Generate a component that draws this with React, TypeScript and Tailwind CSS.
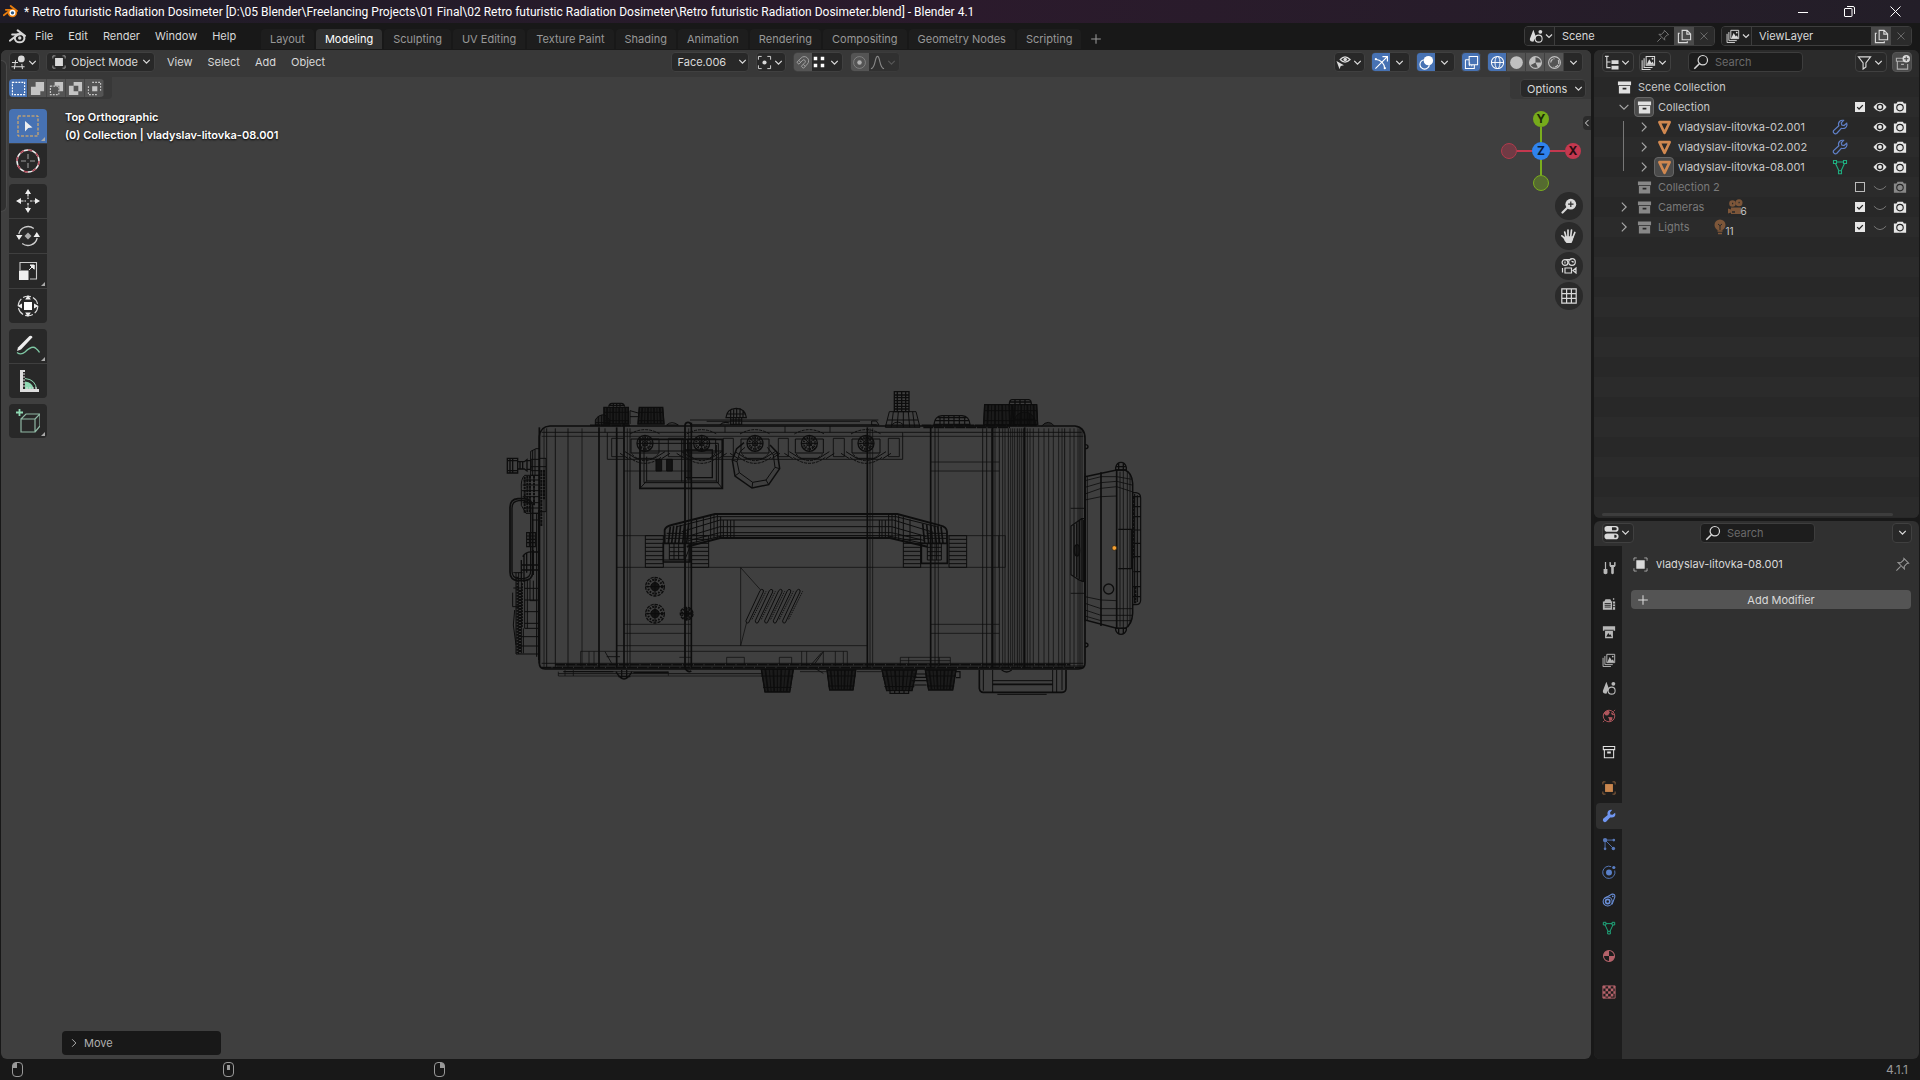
import { useState } from "react";
import type { ReactNode } from "react";

type IconProps = { name: string; size?: number; className?: string };

const icons: Record<string, ReactNode> = {
  chevron: <path d="M4 6 8 10l4-4" fill="none" stroke="currentColor" strokeWidth="1.6" />,
  right: <path d="M5.5 3 10.5 8l-5 5" fill="none" stroke="currentColor" strokeWidth="1.3" />,
  left: <path d="M10.5 3 5.5 8l5 5" fill="none" stroke="currentColor" strokeWidth="1.6" />,
  down: <path d="M3 5.5 8 10.5l5-5" fill="none" stroke="currentColor" strokeWidth="1.3" />,
  plus: <path d="M8 2.500v11M2.500 8h11" fill="none" stroke="currentColor" strokeWidth="1.2" />,
  cross: <path d="m4 4 8 8M12 4l-8 8" fill="none" stroke="currentColor" strokeWidth="1.1" />,
  check: <path d="m3.5 8.2 3 3 6-6.2" fill="none" stroke="currentColor" strokeWidth="2" />,
  blender: (
    <>
      <path d="M8.2 2.2 15 7.4M.8 12 8.4 6.2M3 6.2h7" fill="none" stroke="currentColor" strokeWidth="1.9" strokeLinecap="round" />
      <ellipse cx="10" cy="9.6" rx="4.5" ry="3.9" fill="none" stroke="currentColor" strokeWidth="1.9" />
      <circle cx="10.1" cy="9.4" r="1.6" fill="currentColor" />
    </>
  ),
  view3d: (
    <>
      <path d="M5 5.5 3.5 15M11.5 9.5l.7 5.5M1 8h6.5M.5 12.5h14" fill="none" stroke="currentColor" strokeWidth="1.1" />
      <circle cx="11" cy="4.2" r="3.6" fill="currentColor" />
    </>
  ),
  object: (
    <>
      <path d="M1 4V1h3M12 1h3v3M15 12v3h-3M4 15H1v-3" fill="none" stroke="currentColor" strokeWidth="1" opacity=".7" />
      <path d="M3.500 3.500h9v9h-9z" fill="currentColor" />
    </>
  ),
  pivot: (
    <>
      <path d="M1.5 5V1.5H5M11 1.5h3.5V5M14.5 11v3.500H11M5 14.500H1.500V11" fill="none" stroke="currentColor" strokeWidth="1" />
      <circle cx="8" cy="8" r="2.200" fill="currentColor" />
    </>
  ),
  magnet: (
    <path d="M2 7.800 6.500 3.200a4.600 4.600 0 0 1 6.800 6.300L9 14.200 6.800 12l4-4.200a1.800 1.800 0 0 0-2.400-2.500L4.200 9.800zM4 5.800l2.200 2.100M10.900 12.100 8.800 10" fill="none" stroke="currentColor" strokeWidth="1" />
  ),
  increment: <path d="M2 2h4v4H2zM10 2h4v4h-4zM2 10h4v4H2zM10 10h4v4h-4z" fill="currentColor" />,
  proportional: (
    <>
      <circle cx="8" cy="8" r="6.300" fill="none" stroke="currentColor" strokeWidth="1" opacity=".5" />
      <circle cx="8" cy="8" r="2.400" fill="currentColor" />
    </>
  ),
  falloff: <path d="M1 14.500C6 14.500 5 1.500 8 1.500s2 13 7 13" fill="none" stroke="currentColor" strokeWidth="1.200" />,
  visibility: (
    <>
      <path d="M4.500 4.800Q9.500-1 15 4.800 9.500 10.500 4.500 4.800z" fill="none" stroke="currentColor" strokeWidth="1.300" />
      <circle cx="9.800" cy="4.700" r="1.900" fill="currentColor" />
      <path d="M.5 6.500 8.500 10.800 5 11.700l-1.200 3.600z" fill="currentColor" />
    </>
  ),
  gizmo: (
    <>
      <path d="M1.500 14.500 14 2M9 1.700h5.300V7M1.500 4.500Q10.500 5.500 11.500 14.500" fill="none" stroke="currentColor" strokeWidth="1.200" />
      <circle cx="2" cy="4.500" r="1.200" fill="currentColor" />
      <circle cx="11.500" cy="14" r="1.200" fill="currentColor" />
    </>
  ),
  overlay: (
    <>
      <circle cx="10" cy="6" r="5" fill="currentColor" />
      <circle cx="6" cy="10" r="5" fill="none" stroke="currentColor" strokeWidth="1.200" />
    </>
  ),
  xray: (
    <>
      <path d="M5.500 1.500h9v9h-9zM1.500 5v9.500H11V11M1.500 5h4" fill="none" stroke="currentColor" strokeWidth="1.100" />
      <path d="M6 8v3.500h4" fill="none" stroke="currentColor" strokeDasharray="1.500 1" />
    </>
  ),
  wire: (
    <>
      <circle cx="8" cy="8" r="6.500" fill="none" stroke="currentColor" strokeWidth="1.100" />
      <path d="M1.500 8h13M7 1.500q-3.500 6.500 0 13M9 1.500q3.500 6.500 0 13" fill="none" stroke="currentColor" strokeWidth="1" />
    </>
  ),
  solid: <circle cx="8" cy="8" r="6.800" fill="currentColor" />,
  material: (
    <>
      <circle cx="8" cy="8" r="6.300" fill="none" stroke="currentColor" strokeWidth="1.200" />
      <path d="M8 8V1.700A6.300 6.300 0 0 0 1.700 8zM8 8h6.300A6.300 6.300 0 0 1 8 14.300z" fill="currentColor" />
    </>
  ),
  previewMaterial: (
    <>
      <circle cx="8" cy="8" r="6.300" fill="none" stroke="currentColor" strokeWidth="1.200" />
      <path d="M8 8V1.700A6.300 6.300 0 0 0 2.600 11zM8 8l2.600 5.800A6.300 6.300 0 0 0 14.300 8z" fill="currentColor" />
    </>
  ),
  rendered: (
    <>
      <circle cx="8" cy="8" r="6.300" fill="none" stroke="currentColor" strokeWidth="1.200" />
      <path d="M4 8a4 4 0 0 1 4-4M12 5.500a5 5 0 0 1-5 7.300" fill="none" stroke="currentColor" strokeWidth="1.300" strokeDasharray="4 1" />
    </>
  ),
  scene: (
    <>
      <path d="M5 .8 1 11q-.5 3.500 4 3.500 1-3 2.500-4.200L8 9z" fill="currentColor" />
      <circle cx="13" cy="3.200" r="2.200" fill="currentColor" />
      <circle cx="11" cy="11" r="4" fill="none" stroke="currentColor" strokeWidth="1.200" />
    </>
  ),
  layers: (
    <>
      <path d="M5.500 1.500h9v9.500h-9zM3.300 3.500v9.800h9M1.200 5.500v10h9" fill="none" stroke="currentColor" strokeWidth="1.100" />
      <path d="m6 10.500 2.800-6 2.400 4 1.300-1.500 1.500 3.500z" fill="currentColor" />
      <circle cx="12.300" cy="4" r="1" fill="currentColor" />
    </>
  ),
  pin: (
    <path d="M1.500 14.500 6 10M9.500 1.500 14.500 6.500l-1.700.3-3 3.200.2 2.800L3.300 6l2.800.2 3.200-3z" fill="none" stroke="currentColor" strokeWidth="1.100" />
  ),
  copy: (
    <path d="M5.500 1.500h5.300l3.700 3.700v6.300h-9zM10.500 1.500v4h4M3 4.500H1.500v10H11V13" fill="none" stroke="currentColor" strokeWidth="1.200" />
  ),
  outliner: (
    <>
      <path d="M1 1.500h4M3 1.500v12h4M3 7.500h4" fill="none" stroke="currentColor" strokeWidth="1.200" />
      <path d="M8 5.500h7.500v4H8zM8 11.500h7.500v4H8z" fill="currentColor" />
    </>
  ),
  properties: (
    <>
      <rect x=".5" y="1" width="15" height="6.200" rx="3" fill="currentColor" />
      <rect x=".5" y="9" width="15" height="6.200" rx="3" fill="currentColor" />
      <path d="M8.500 2.500h3.500a1.600 1.600 0 0 1 0 3.200H8.500zM11 10.500h1a1.600 1.600 0 0 1 0 3.200h-1z" fill="#282828" />
    </>
  ),
  search: (
    <>
      <circle cx="9.800" cy="6.200" r="4.700" fill="none" stroke="currentColor" strokeWidth="1.200" />
      <path d="m6.300 9.700-5 5" fill="none" stroke="currentColor" strokeWidth="1.600" />
    </>
  ),
  filter: <path d="M1.500 2h13L9.500 8.500v4.300L6.500 15V8.500z" fill="none" stroke="currentColor" strokeWidth="1.200" />,
  newCollection: (
    <>
      <path d="M9 3.500H1.500v3.200h13M2.500 7v8h11V9.500M6.500 10h3" fill="none" stroke="currentColor" strokeWidth="1.200" opacity=".7" />
      <circle cx="12" cy="4" r="4" fill="currentColor" />
      <path d="M12 1.700v4.600M9.700 4h4.600" stroke="#444" strokeWidth="1.100" />
    </>
  ),
  collection: (
    <>
      <path d="M1 1.500h14v4H1zM2 6.500h12v8H2z" fill="currentColor" />
      <path d="M6 8.200h4V10H6z" fill="#282828" />
    </>
  ),
  collectionTab: <path d="M1.500 1.700h13v3.600h-13zM2.700 5.500v9h10.600v-9M6.500 8h3v1h-3z" fill="none" stroke="currentColor" strokeWidth="1.200" />,
  mesh: <path d="M2.500 2.300h11L8 13.800z" fill="none" stroke="currentColor" strokeWidth="2.800" strokeLinejoin="round" />,
  meshData: (
    <>
      <path d="M4.500 3h7M3.500 4.500 7 12M12.500 4.500 9 12" fill="none" stroke="currentColor" strokeWidth="1.100" />
      <path d="M1.500 1.500h3v3h-3zM11.500 1.500h3v3h-3zM6.500 11.800h3v3h-3z" fill="none" stroke="currentColor" strokeWidth="1.100" />
    </>
  ),
  wrenchLine: (
    <path d="M14.700 4.300 12 6.500 9.800 6 9.300 3.900 11.500 1.400Q7.500.6 6.500 4.500q0 1.500.3 2.300L1.600 11.500q-.8 1.500.4 2.700t2.700.3L9.300 9.300q5 1 5.700-3.300z" fill="none" stroke="currentColor" strokeWidth="1.200" />
  ),
  wrench: (
    <path d="M15 4.300 12 6.700 9.600 6.200 9.200 3.900 11.500 1Q7 .6 6.200 4.500q0 1.500.3 2.300L1.300 11.200q-.9 1.800.4 3.100t3 .4L9.300 9.600q5.500 1 6-3.300z" fill="currentColor" />
  ),
  eye: (
    <>
      <path d="M.5 8Q8-2 15.500 8 8 18 .5 8z" fill="currentColor" />
      <circle cx="8" cy="8" r="3.800" fill="#282828" />
      <circle cx="8" cy="8" r="2.200" fill="currentColor" />
    </>
  ),
  eyeClosed: <path d="M1 7Q8 15 15 7" fill="none" stroke="currentColor" strokeWidth="1.100" />,
  camera: (
    <>
      <path d="M1 4h3l1.200-2h6L12.500 4H15v10.500H1z" fill="currentColor" />
      <circle cx="8" cy="8.700" r="3.700" fill="none" stroke="#282828" strokeWidth="1.300" />
    </>
  ),
  movie: (
    <>
      <circle cx="4.500" cy="4.500" r="3.300" fill="currentColor" />
      <circle cx="11" cy="3.700" r="3.500" fill="currentColor" />
      <path d="M3 8.500h10V15H3zM0 9.500l3 1v3l-3 1z" fill="currentColor" />
      <path d="M4 4.500h1.200M10.500 3.500h1.200M4 13h3" stroke="#282828" strokeWidth="1.300" />
    </>
  ),
  bulb: (
    <>
      <circle cx="7" cy="6" r="5.500" fill="currentColor" />
      <path d="M4.500 12h5M5 14.500h4" stroke="currentColor" strokeWidth="1.500" />
      <path d="M7 6.500V11M5 5l2 1.700L9 5" stroke="#282828" strokeWidth="1" fill="none" />
    </>
  ),
  tool: (
    <>
      <path d="M4 1v8" stroke="currentColor" strokeWidth="1.400" />
      <path d="M1.800 9h4.400v5q-2.200 2.500-4.400 0z" fill="currentColor" />
      <path d="M8.500 1v4q.3 1.700 2 2.200V14q1.500 2 3 0V7.200q1.600-.5 2-2.200V1l-1.700.5v3h-3.600v-3z" fill="currentColor" />
    </>
  ),
  render: (
    <>
      <path d="M1 5h1.500L4 2.500h5.500L11 5h4v9.500H1z" fill="currentColor" />
      <path d="M3 7.500h7M3 9.500h7M3 11.500h7M12 5v9.500M12 8h3M12 11h3" stroke="#1d1d1d" strokeWidth="1" />
      <path d="M12.500 1.500H14V3h-1.500z" fill="currentColor" />
    </>
  ),
  output: (
    <>
      <path d="M1 1.500h14v5h-2.500V15h-9V6.500H1z" fill="currentColor" />
      <path d="M2.500 6h11" stroke="#1d1d1d" strokeWidth="1" />
      <path d="m4.800 13.500 2.400-4.300 1.500 2.300 1-1 1.500 3z" fill="#1d1d1d" />
    </>
  ),
  world: (
    <>
      <circle cx="8" cy="8" r="6.600" fill="none" stroke="currentColor" strokeWidth="1.100" />
      <path d="M2 5q3-3.500 5.500-3.200L9 4 7 7 4.500 7.500zM7 9l5 .5-.5 3L8.500 14 8 11.500zM11 3.500l3 3-1.500.7-2-1.500z" fill="currentColor" />
      <path d="M1 15l2-2M13 3l2-2" stroke="currentColor" />
    </>
  ),
  particles: (
    <>
      <path d="M3.500 3.500H13M3.500 3.500V13M3.500 3.500l9 9" fill="none" stroke="currentColor" strokeWidth="1" />
      <circle cx="3.500" cy="3.500" r="2.500" fill="currentColor" />
      <circle cx="13.500" cy="3.500" r="1.500" fill="currentColor" />
      <circle cx="3.500" cy="13.500" r="1.500" fill="currentColor" />
      <circle cx="13" cy="13" r="2" fill="currentColor" />
    </>
  ),
  physics: (
    <>
      <circle cx="8" cy="8.500" r="3.400" fill="currentColor" />
      <path d="M10.500 1.900A7 7 0 1 0 14.500 6.300" fill="none" stroke="currentColor" strokeWidth="1" />
      <circle cx="13.500" cy="2.800" r="1.800" fill="currentColor" />
    </>
  ),
  constraint: (
    <>
      <path d="M2.300 6.500 11.500 1.300q3.500-.3 3.200 3.200L11.500 13" fill="none" stroke="currentColor" strokeWidth="1.200" />
      <circle cx="6.500" cy="9.700" r="5.200" fill="none" stroke="currentColor" strokeWidth="1.200" />
      <circle cx="6.500" cy="9.700" r="2.400" fill="none" stroke="currentColor" strokeWidth="1.800" />
      <circle cx="12.300" cy="3.800" r="1" fill="currentColor" />
    </>
  ),
  texture: (
    <>
      <path d="M1 1h14v14H1z" fill="none" stroke="currentColor" />
      <path d="M1 1h3v3H1zM7 1h3v3H7zM4 4h3v3H4zM10 4h3v3h-3zM1 7h3v3H1zM7 7h3v3H7zM4 10h3v3H4zM10 10h3v3h-3zM13 1h2v3h-2zM13 7h2v3h-2zM7 13h3v2H7zM1 13h3v2H1z" fill="currentColor" />
    </>
  ),
  selSet: <path d="M1.500 1.500h13v13h-13z" fill="none" stroke="currentColor" strokeWidth="1.200" strokeDasharray="2 1.200" />,
  selExtend: <path d="M6 1h9v10h-4v4H1V6h5z" fill="currentColor" />,
  selSubtract: (
    <>
      <path d="M6 1h9v10h-4V5H6z" fill="currentColor" />
      <path d="M1.500 5.500h9v9h-9z" fill="none" stroke="currentColor" strokeWidth="1.200" strokeDasharray="2 1.200" />
    </>
  ),
  selInvert: <path fillRule="evenodd" d="M6 1h9v10h-4v4H1V5h5zM6 5v6h5V5z" fill="currentColor" />,
  selIntersect: (
    <>
      <path d="M5.500 1.500h9v9M1.500 5.500v9h9" fill="none" stroke="currentColor" strokeWidth="1.200" strokeDasharray="2 1.200" />
      <path d="M5.500 5.500h5.500v5.500H5.500z" fill="currentColor" />
    </>
  ),
  zoom: (
    <>
      <circle cx="9.800" cy="6.200" r="5.400" fill="currentColor" />
      <path d="m6.500 9.500-5 5" stroke="currentColor" strokeWidth="2.200" strokeLinecap="round" />
      <path d="M9.800 3.500v5.400M7.100 6.200h5.400" stroke="#2a2a2a" strokeWidth="1.200" />
    </>
  ),
  hand: (
    <>
      <path d="M5 9 3.700 4M7 8.500V2M9.700 8.500 10.500 2M11.800 9.500l2-5M5.500 11.500.9 7.800" stroke="currentColor" strokeWidth="1.700" strokeLinecap="round" />
      <path d="M4 8.300h8.500q0 3.500-2 6.700h-5Q3 12.500 2.500 10z" fill="currentColor" />
    </>
  ),
  viewCamera: (
    <>
      <circle cx="4" cy="4.500" r="2.900" fill="none" stroke="currentColor" strokeWidth="1.200" />
      <circle cx="11" cy="4" r="3.300" fill="none" stroke="currentColor" strokeWidth="1.200" />
      <path d="M4.500 1.600h6M4 3.500v2M10.500 3.500h1.500v1.300" stroke="currentColor" strokeWidth="1.200" fill="none" />
      <path d="M4 10h6.500v5H4zM1.500 10v4.500M15 10l-3 2.500 3 2.500z" stroke="currentColor" strokeWidth="1.200" fill="none" />
    </>
  ),
  grid: <path d="M.8.800h14.400v14.400H.8zM5.600.800v14.400M10.400.800v14.400M.8 5.600h14.400M.8 10.400h14.400" fill="none" stroke="currentColor" strokeWidth="1.200" />,
};

const toolIcons: Record<string, ReactNode> = {
  select: (
    <>
      <path d="M2 2h20v20H2z" fill="none" stroke="#f0b45a" strokeDasharray="3 1.500" />
      <path d="m9 7 7.500 6.500-4.300.5L9 17.500z" fill="#eee" />
    </>
  ),
  cursor: (
    <>
      <circle cx="12" cy="12" r="11" fill="none" stroke="#eee" strokeWidth="1.500" />
      <circle cx="12" cy="12" r="11" fill="none" stroke="#b04a5a" strokeWidth="1.500" strokeDasharray="4.300 4.300" />
      <path d="M12 5v5M12 14v5M5 12h5M14 12h5" stroke="#999" strokeWidth="1.100" />
    </>
  ),
  move: (
    <>
      <path d="M12 5v5M12 14v5M5 12h5M14 12h5" stroke="#eee" strokeWidth="1.200" strokeDasharray="2.500 1" />
      <path d="m12 0 3 5H9zM12 24l3-5H9zM0 12l5-3v6zM24 12l-5-3v6z" fill="#eee" />
    </>
  ),
  rotate: (
    <>
      <path d="M2.800 10a9.500 9.500 0 0 1 15-5.500M21.200 14a9.500 9.500 0 0 1-15 5.500" fill="none" stroke="#ccc" strokeWidth="1.300" />
      <path d="M0 11h6.500L3 16zM17.500 13H24l-3.200-5z" fill="#eee" />
      <path d="m12 8.500 3.500 3.500-3.500 3.500L8.500 12z" fill="#aaa" />
    </>
  ),
  scale: (
    <>
      <path d="M4 11V3.500h16.500V20H14" fill="none" stroke="#ccc" strokeWidth="1.100" />
      <path d="M3 11.500h9.500V21H3z" fill="#eee" />
      <path d="m13 11 4-4M14 6h4.200v4.200z" stroke="#eee" fill="#eee" />
    </>
  ),
  transform: (
    <>
      <circle cx="12" cy="12" r="9.800" fill="none" stroke="#ddd" strokeWidth="1.100" strokeDasharray="8 2.200" />
      <path d="m12 1 2.800 4.500H9.200zM12 23l2.800-4.500H9.200zM1.500 12 6 9.500v5zM22.500 12 18 9.500v5z" fill="#eee" />
      <path d="M8 8h8v8H8z" fill="#fff" />
    </>
  ),
  annotate: (
    <>
      <path d="M1 18.500q4 3 8-.5c4-4 8-6.500 11-3.500q2 1.500 3.500 4" fill="none" stroke="#7fc8a4" strokeWidth="1.300" />
      <path d="m1 17 1-3.500L13.500 2q2.500-1 3 1.200L5 15.500z" fill="#eee" />
    </>
  ),
  measure: (
    <>
      <path d="M9 9.500q11 1 11.500 11.500" fill="none" stroke="#8fd9b3" />
      <path d="M9 12.500q7.500.5 8.500 7.500H9z" fill="#8fd9b3" />
      <path d="M4 1h5v2H7v17h16v3H4z" fill="#ddd" />
      <path d="M7 5h2M7 8h2M7 11h2M7 14h2M7 17h2M11 20v-2M14 20v-2M17 20v-2M20 20v-2" stroke="#ddd" />
    </>
  ),
  cube: (
    <>
      <path d="M3.500 0v7M0 3.500h7" stroke="#8fd9b3" strokeWidth="1.800" />
      <path d="M5 10h14v13H5zM5 10l5-5h14v12l-5 6M19 10l5-5" fill="none" stroke="#8fb8a4" strokeWidth="1.200" />
    </>
  ),
};

function Icon({ name, size = 16, className = "" }: IconProps) {
  return (
    <svg viewBox="0 0 16 16" width={size} height={size} className={`shrink-0 ${className}`} aria-hidden="true">
      {icons[name]}
    </svg>
  );
}

const menus = ["File", "Edit", "Render", "Window", "Help"];
const workspaces = [
  "Layout", "Modeling", "Sculpting", "UV Editing", "Texture Paint", "Shading",
  "Animation", "Rendering", "Compositing", "Geometry Nodes", "Scripting",
];
const toolGroups = [
  [{ id: "select", menu: true }, { id: "cursor" }],
  [{ id: "move" }, { id: "rotate" }, { id: "scale", menu: true }, { id: "transform" }],
  [{ id: "annotate", menu: true }, { id: "measure" }],
  [{ id: "cube", menu: true }],
];
const selectModes = ["selSet", "selExtend", "selSubtract", "selInvert", "selIntersect"];

const tabGroups = [
  [{ icon: "tool", color: "text-[#b8b8b8]" }],
  [
    { icon: "render", color: "text-[#b8b8b8]" },
    { icon: "output", color: "text-[#b8b8b8]" },
    { icon: "layers", color: "text-[#b8b8b8]" },
    { icon: "scene", color: "text-[#b8b8b8]" },
    { icon: "world", color: "text-[#b0565c]" },
  ],
  [{ icon: "collectionTab", color: "text-[#e0e0e0]" }],
  [
    { icon: "object", color: "text-[#c9864e]" },
    { icon: "wrench", color: "text-[#7096f0]" },
    { icon: "particles", color: "text-[#5878b8]" },
    { icon: "physics", color: "text-[#5a80c8]" },
    { icon: "constraint", color: "text-[#6a8fd8]" },
    { icon: "meshData", color: "text-[#1fae80]" },
    { icon: "material", color: "text-[#b5626a]" },
  ],
  [{ icon: "texture", color: "text-[#b5626a]" }],
];

function TitleBar() {
  return (
    <div className="flex h-[23px] shrink-0 items-center bg-linear-to-r from-[#1f1c27] via-[#2b1a2c] to-[#231e28] pl-[3px] pr-0.5 text-white">
      <svg viewBox="0 0 16 16" width="15" height="15" aria-hidden="true">
        <path d="M8.200 2.200 15 7.400M.8 12 8.400 6.200M3 6.200h7" fill="none" stroke="#e87d0d" strokeWidth="1.900" strokeLinecap="round" />
        <ellipse cx="10" cy="9.600" rx="5" ry="4.500" fill="#e87d0d" />
        <circle cx="10.100" cy="9.400" r="3.200" fill="#fff" />
        <circle cx="10.100" cy="9.400" r="1.800" fill="#265787" />
      </svg>
      <span className="ml-1.5 font-['Roboto',sans-serif] text-[12px] whitespace-pre">
        * Retro futuristic Radiation Dosimeter [D:\05 Blender\Freelancing Projects\01 Final\02 Retro futuristic Radiation Dosimeter\Retro futuristic Radiation Dosimeter.blend] - Blender 4.1
      </span>
      <div className="ml-auto flex h-full">
        <button aria-label="Minimize" className="flex w-[46px] items-center justify-center">
          <svg width="10" height="10"><path d="M0 5.500h10" stroke="currentColor" /></svg>
        </button>
        <button aria-label="Restore" className="flex w-[46px] items-center justify-center">
          <svg width="11" height="11"><path d="M.5 3q0-.5.5-.500h6.500q.5 0 .5.500V10q0 .5-.5.500H1q-.5 0-.5-.500zM3 .5h6q1.500 0 1.500 1.500v6" fill="none" stroke="currentColor" /></svg>
        </button>
        <button aria-label="Close" className="flex w-[46px] items-center justify-center">
          <svg width="11" height="11"><path d="m.5.500 10 10M10.500.500l-10 10" stroke="currentColor" /></svg>
        </button>
      </div>
    </div>
  );
}

function DataBlock({ icon, label, name, pinned }: { icon: string; label: string; name: string; pinned?: boolean }) {
  return (
    <div className="flex h-5 w-[191px] overflow-hidden rounded border border-[#3d3d3d] bg-[#1d1d1d]">
      <button aria-label={`Browse ${label}`} className="flex w-[30px] items-center border-r border-[#3d3d3d] bg-[#202020] pl-1">
        <Icon name={icon} size={14} />
        <Icon name="chevron" size={12} />
      </button>
      <input aria-label={label} defaultValue={name} className="w-0 flex-1 px-[7px] outline-none" />
      {pinned && <Icon name="pin" size={14} className="mr-1 self-center text-[#777]" />}
      <button aria-label={`New ${label}`} className="flex w-5 items-center justify-center bg-[#4a4a4a]">
        <Icon name="copy" size={15} />
      </button>
      <button aria-label={`Remove ${label}`} className="flex w-5 items-center justify-center bg-[#2b2b2b] text-[#6a6a6a]">
        <Icon name="cross" size={14} />
      </button>
    </div>
  );
}

function TopBar() {
  const [active, setActive] = useState("Modeling");
  return (
    <div className="flex h-[27px] shrink-0 items-center bg-[#181818] pr-2 pb-px">
      <button aria-label="Blender" className="pl-[9px] text-[#d5d5d5]">
        <Icon name="blender" size={17} />
      </button>
      <div className="flex w-[235px] gap-px pl-0.5">
        {menus.map((m) => (
          <button key={m} className="px-[7px]">{m}</button>
        ))}
      </div>
      <div className="flex gap-0.5 self-end">
        {workspaces.map((w) => (
          <button
            key={w}
            onClick={() => setActive(w)}
            className={`h-5 rounded-t px-[9px] ${w === active ? "bg-[#303030] text-white" : "bg-[#1d1d1d] text-[#989898]"}`}
          >
            {w}
          </button>
        ))}
        <button aria-label="Add workspace" className="px-1.5 text-[#989898]">
          <Icon name="plus" size={14} />
        </button>
      </div>
      <div className="ml-auto flex gap-1.5">
        <DataBlock icon="scene" label="Scene" name="Scene" pinned />
        <DataBlock icon="layers" label="View Layer" name="ViewLayer" />
      </div>
    </div>
  );
}

function IconMenu({ icon, label, className = "w-8" }: { icon: string; label: string; className?: string }) {
  return (
    <button aria-label={label} className={`flex h-5 items-center justify-center rounded border border-[#404040] bg-[#282828] ${className}`}>
      <Icon name={icon} size={15} />
      <Icon name="chevron" size={13} />
    </button>
  );
}

function ToggleMenu({ icon, label }: { icon: string; label: string }) {
  return (
    <div className="flex h-5 w-[39px] overflow-hidden rounded border border-[#404040] bg-[#282828]">
      <button aria-label={label} className="flex w-[18px] items-center justify-center bg-[#4772b3] text-white">
        <Icon name={icon} size={15} />
      </button>
      <button aria-label={`${label} options`} className="flex flex-1 items-center justify-center">
        <Icon name="chevron" size={13} />
      </button>
    </div>
  );
}

function ViewportHeader() {
  const [shading, setShading] = useState("wire");
  return (
    <div className="grid h-[27px] shrink-0 grid-cols-[1fr_auto_1fr] items-center bg-[#383838] px-2 pb-[3px]">
      <div className="flex items-center">
        <IconMenu icon="view3d" label="Editor type" className="w-[31px]" />
        <div className="relative ml-1.5">
          <Icon name="object" size={14} className="pointer-events-none absolute top-[3px] left-1.5" />
          <select aria-label="Mode" className="h-5 w-[109px] appearance-none rounded border border-[#404040] bg-[#282828] pl-6 outline-none">
            <option>Object Mode</option>
            <option>Edit Mode</option>
          </select>
          <Icon name="chevron" size={13} className="pointer-events-none absolute top-[3px] right-0.5" />
        </div>
        <div className="ml-[5px] flex gap-px">
          {["View", "Select", "Add", "Object"].map((m) => (
            <button key={m} className="px-[7px]">{m}</button>
          ))}
        </div>
      </div>

      <div className="flex items-center gap-[7px] pr-[22px]">
        <div className="relative">
          <select aria-label="Transform orientation" className="h-5 w-[78px] appearance-none rounded border border-[#404040] bg-[#282828] pl-1.5 outline-none">
            <option>Face.006</option>
            <option>Global</option>
          </select>
          <Icon name="chevron" size={13} className="pointer-events-none absolute top-[3px] right-0" />
        </div>
        <IconMenu icon="pivot" label="Pivot point" className="w-[30px]" />
        <div className="flex h-5 w-[50px] overflow-hidden rounded border border-[#404040] bg-[#282828]">
          <button aria-label="Snap" className="flex w-[18px] items-center justify-center bg-[#545454] text-[#a5a5a5]">
            <Icon name="magnet" size={15} />
          </button>
          <button aria-label="Snap to" className="flex flex-1 items-center justify-center gap-0.5">
            <Icon name="increment" size={14} className="text-white" />
            <Icon name="chevron" size={13} />
          </button>
        </div>
        <div className="flex h-5 w-[50px] overflow-hidden rounded border border-[#3b3b3b] bg-[#303030]">
          <button aria-label="Proportional editing" className="flex w-[18px] items-center justify-center bg-[#545454] text-[#b0b0b0]">
            <Icon name="proportional" size={15} />
          </button>
          <button aria-label="Falloff" className="flex flex-1 items-center justify-center text-[#888]">
            <Icon name="falloff" size={15} />
            <Icon name="chevron" size={13} className="text-[#555]" />
          </button>
        </div>
      </div>

      <div className="flex items-center justify-end gap-1.5">
        <IconMenu icon="visibility" label="Object types" className="w-[31px]" />
        <ToggleMenu icon="gizmo" label="Gizmos" />
        <ToggleMenu icon="overlay" label="Overlays" />
        <button aria-label="X-ray" className="flex size-5 items-center justify-center rounded border border-[#404040] bg-[#4772b3] text-white">
          <Icon name="xray" size={15} />
        </button>
        <div className="flex h-5 w-24 overflow-hidden rounded border border-[#404040] bg-[#282828]">
          {["wire", "solid", "previewMaterial", "rendered"].map((s) => (
            <button
              key={s}
              aria-label={s}
              onClick={() => setShading(s)}
              className={`flex w-[19px] items-center justify-center border-r border-[#404040] ${s === shading ? "bg-[#4772b3] text-white" : "bg-[#545454] text-[#c0c0c0]"}`}
            >
              <Icon name={s} size={15} />
            </button>
          ))}
          <button aria-label="Shading options" className="flex flex-1 items-center justify-center">
            <Icon name="chevron" size={13} />
          </button>
        </div>
      </div>
    </div>
  );
}

// Ribbed knob seen from the side, drawn wide end first
function Knob({ x, y, w, h, taper = 0 }: { x: number; y: number; w: number; h: number; taper?: number }) {
  const ribs = Array.from({ length: 9 }, (_, i) => i);
  return (
    <g>
      <path d={`M${x} ${y}h${w}l${-taper} ${h}h${2 * taper - w}z`} fillOpacity=".7" strokeWidth="4" />
      {ribs.map((i) => (
        <path
          key={i}
          d={`M${x + (w * i) / 8} ${y}L${x + taper + ((w - 2 * taper) * i) / 8} ${y + h}`}
          strokeWidth={i % 2 ? 5 : 3}
        />
      ))}
      <path d={`M${x} ${y + h * 0.3}h${w}M${x + taper / 2} ${y + h * 0.8}h${w - taper}`} />
    </g>
  );
}

function Port({ cx }: { cx: number }) {
  return (
    <g>
      <path d={`M${cx - 42} 207h84v42h-84zM${cx - 60} 245l32 20h56l32-20M${cx - 75} 250l25 16M${cx + 75} 250l-25 16`} />
      <path d={`M${cx - 45} 192q45-26 90 0M${cx - 48} 262q48 36 96 0M${cx - 40} 252q40 40 80 0`} strokeDasharray="9 3" />
      <circle cx={cx} cy="220" r="24" strokeWidth="4" />
      <circle cx={cx} cy="220" r="17" strokeDasharray="4 3" strokeWidth="6" />
      <circle cx={cx} cy="220" r="8" />
      <path d={`M${cx - 24} 220h48M${cx} 196v48M${cx - 17} 203l34 34M${cx + 17} 203l-34 34`} />
    </g>
  );
}

function Screw({ cx, cy, r }: { cx: number; cy: number; r: number }) {
  return (
    <g>
      <circle cx={cx} cy={cy} r={r} strokeWidth="4" strokeDasharray="10 3" />
      <circle cx={cx} cy={cy} r={r * 0.75} strokeWidth="6" strokeDasharray="5 4" />
      <circle cx={cx} cy={cy} r={r * 0.45} fillOpacity=".9" />
      <path d={`M${cx - r} ${cy}h${2 * r}M${cx} ${cy - r}v${2 * r}`} />
    </g>
  );
}

const bodyThin = [
  162, 276, 412, 585, 596, 1140, 1148, 1345, 1515, 1538, 1545, 1562, 1568, 1574, 1588, 1594,
  1612, 1620, 1630, 1646, 1662, 1676, 1690, 1706, 1716, 1740, 1752, 1764, 1776,
];
const bodyMid = [170, 196, 234, 420, 1335, 1478, 1490, 1505, 1528, 1555, 1582, 1600, 1724, 1770];
const bodyBold = [148, 327, 380, 402, 604, 1132, 1322, 1508, 1604];

function Wireframe() {
  return (
    <svg
      viewBox="-132 12 2100 1083"
      width="700"
      height="361"
      className="pointer-events-none absolute inset-0 m-auto"
      fill="none"
      stroke="#0d0d0d"
      strokeWidth="3"
      role="img"
      aria-label="Radiation dosimeter wireframe"
    >
      <g fill="#0d0d0d" fillOpacity="0">
        <g strokeOpacity=".7">
          {bodyThin.map((x) => <path key={x} d={`M${x} 175V890`} />)}
          <path d="M155 199H1780M402 303H604M1322 276H1528M1322 303H1528M402 763H604M402 790H604M1322 763H1528M1322 790H1528" />
          <path d="M380 827H1132M272 844H1072V888M272 844V888M297 844V888M312 844V888M935 844V888M950 844V888M1000 844V888M1036 844V888M1060 844V888" />
          <path d="M380 497H1546V592H380M1526 497V592M752 593V827L770 757M752 593L812 660" />
          <path d="M568 862h36v20M710 882v-20h53v20M868 882v-20h37v20M1231 888v-26h150v26M1256 862v26M1348 862v26M1231 872h150" />
          <path d="M205 905V918H820M225 900v18M250 900v18M300 905h235v12M930 905h80M1100 905h75" />
        </g>
        <g strokeOpacity=".85">
          {bodyMid.map((x) => <path key={x} d={`M${x} 175V892`} />)}
          <path d="M352 187H1240M352 268H1238V187M352 187V268M155 187H352M1240 187H1775M380 187V497M600 150H1165M650 154H1110M600 164H1160" />
          <path d="M365 205h37v55h-37zM535 205h45v55h-45zM700 205h30v55h-30zM865 205h30v55h-30zM1030 205h33v55h-33zM1195 205h33v55h-33z" />
          <path d="M155 880H1780M200 888H1780M205 911H820M345 175v12M705 168v19M885 168v19M1020 168v19M345 845l20 35M350 860h40M975 880l25-35M960 888l35-40M975 895l25 15" />
          <path d="M1742 415h43v255h-43" />
        </g>
        <g strokeWidth="5">
          {bodyBold.map((x) => <path key={x} d={`M${x} ${x === 604 || x === 402 ? 158 : 172}V${x === 148 ? 880 : 895}`} />)}
          <path d="M148 880V200Q150 170 180 168H1755Q1785 172 1785 205V880Q1785 897 1765 897H165Q148 897 148 880" />
          <path d="M195 884H1740M155 893H1780M300 166H420M1295 166H1640M1300 172H1560" strokeDasharray="30 2" />
          <path d="M585 895V165Q587 157 594 157T604 165M585 895q9 14 19 8" />
        </g>

        {/* display, round gauge and grille */}
        <path d="M450 208H697V355H450z" strokeWidth="5.500" />
        <path d="M462 220H685V338H462zM450 355l20-22M697 355l-18-22M470 260V333H679V225M450 243H697M575 208V335" />
        <path d="M587 240H667V323H587zM594 210V330M600 215V330" strokeWidth="4" />
        <path d="M498 268h17v35h-17zM530 268h17v35h-17z" fillOpacity=".9" />
        <path d="M762 218 740 236 727 270 735 318 786 354 836 344 869 296 862 248 840 225" strokeWidth="4.500" />
        <path d="M765 232 750 245 741 275 748 308 788 337 828 330 855 292 850 255 832 232M727 270l14 5M735 318l13-10M786 354l2-17M836 344l-8-14M869 296l-14-4M862 248l-12 7" />
        {[465, 635, 795, 958, 1128].map((cx) => <Port key={cx} cx={cx} />)}
        {[0, 28, 56, 82, 110].map((dx) => (
          <g key={dx}>
            <path d={`M${768 + dx} 752L${810 + dx} 662q5-7 10-2v6L${776 + dx} 758q-8 4-8-6z`} strokeWidth="3" />
            <path d={`M${786 + dx} 748L${828 + dx} 664`} strokeDasharray="4 3" />
          </g>
        ))}
        <Screw cx={495} cy={650} r={28} />
        <Screw cx={495} cy={731} r={28} />
        <Screw cx={590} cy={731} r={19} />

        {/* carry handle and latches */}
        <path d="M524 520V480Q526 470 545 465L675 432H1222L1350 466Q1370 470 1371 485V520" strokeWidth="5.500" />
        <path d="M590 530 690 504H1200L1312 530" strokeWidth="6" />
        <path d="M560 470 680 440H1218L1340 470M575 485 690 450H1210L1330 487M590 500 690 470H1205L1310 500M595 512 690 488H1205L1305 512M600 520 700 497H1190L1300 520" />
        <path d="M662 434v72M672 434v72M682 434v72M692 440v64M700 450v54M712 450v54M722 450v54M732 450v54M1168 450v54M1176 450v54M1186 450v54M1196 434v70M1206 434v72M1216 434v74M1226 436v72M1240 440v72M1260 448v70M640 442v70M620 448v70" />
        {[535, 545, 555, 566, 578, 590].map((x) => (
          <path key={x} d={`M${x} 520l6-${50 + (x - 535) / 6}M${1894 - x} 520l-6-${50 + (x - 535) / 6}`} strokeWidth="5" />
        ))}
        <path d="M530 490h60M528 505h75M1300 505h70M1310 490h60" />
        <path d="M520 520h80v56h-80zM1294 520h78v60h-78z" strokeWidth="5" />
        <path d="M538 520v48h44v-48M552 520v48M566 520v48M538 532h44M538 545h44M538 557h44M1312 520v50h42v-50M1326 520v50M1340 520v50M1312 532h42M1312 545h42M1312 557h42M600 530l-15 38M520 570h80" />
        <path d="M466 497h54v95h-54zM604 497h52v95h-52zM1240 497h52v95h-52zM1377 497h53v95h-53z" />
        {[508, 520, 532, 544, 557, 569, 581].map((y) => (
          <path key={y} d={`M466 ${y}h54M604 ${y}h52M1240 ${y}h52M1377 ${y}h53`} />
        ))}

        {/* top controls */}
        <Knob x={342} y={112} w={73} h={50} />
        <path d="M356 110q2-10 10-10h28q8 0 10 10M356 106h46M370 100v10M380 100v10M390 100v10" strokeWidth="4" />
        <path d="M316 165V150q8-16 28-16l14 14v17zM316 158h42M325 140v24M335 135v30" fillOpacity=".5" />
        <Knob x={448} y={112} w={70} h={50} taper={-4} />
        <path d="M420 122l28 8M420 140h28M420 122v40M530 165q15-14 35 0z" />
        <path d="M708 143q2-27 31-28 28 1 30 28zM712 132h54M722 119v24M731 115v28M740 115v28M750 115v28M759 120v23M722 143v20h33v-20M730 143v20M738 143v20M747 143v20M722 150h33M690 165q10-12 28-6" strokeWidth="3.500" />
        <path d="M1213 65h44v60h-44zM1213 75h44M1213 83h44M1213 92h44M1213 100h44M1213 109h44M1213 117h44M1222 65v60M1235 65v60M1247 65v60" strokeWidth="4" />
        <path d="M1198 125h80l12 47h-104zM1192 150h92M1186 165h104M1210 125l-6 47M1225 125l-4 47M1240 125v47M1255 125l4 47M1268 125l6 47M1205 165q18-18 36 0" />
        <path d="M1332 163q2-24 24-26h60q22 2 24 26zM1334 152h104M1345 143h84M1350 143v20M1362 138v25M1376 138v25M1392 138v25M1408 138v25M1424 143v20" strokeWidth="3.500" />
        <Knob x={1484} y={104} w={84} h={60} taper={-3} />
        <Knob x={1566} y={104} w={74} h={60} taper={-3} />
        <path d="M1558 104q0-14 8-15h50q8 1 8 15M1560 96h62M1575 90v14M1590 90v14M1605 90v14" strokeWidth="4" />
        <path d="M1570 164q2-36 34-38 30 2 34 38zM1574 148h60M1590 130v34M1604 126v38M1618 130v34" fillOpacity=".5" />
        <path d="M1655 168q20-22 38 0M1662 162h24M1145 165v-12h14l8 12z" />

        {/* underside */}
        <Knob x={814} y={898} w={96} h={68} taper={11} />
        <Knob x={1011} y={900} w={86} h={60} taper={8} />
        <Knob x={1176} y={900} w={104} h={62} taper={14} />
        <Knob x={1306} y={900} w={92} h={60} taper={10} />
        <path d="M1200 962v8h56v-8M1214 962v8M1228 962v8M1242 962v8M1270 912h40M1270 922h40M1265 932h50M1270 945h40M1398 905h12v18h-12" strokeWidth="3.500" />
        <path d="M1468 900v55q2 12 12 12h236q12 0 12-12V900" strokeWidth="5" />
        <path d="M1480 900v62M1508 900v67M1688 900v67M1700 900v67M1716 900v60M1508 932h180M1522 973h148" />
        <path d="M1508 943h180" strokeWidth="5" />
        <path d="M378 905q24 44 48 0M385 920h36M395 900v26M410 900v26M430 908h105M220 905h150" strokeWidth="4" />
        <path d="M1535 900q15 12 30 0" strokeWidth="4" />

        {/* left connectors */}
        <path d="M52 265h31v44H52zM52 272h31M52 302h31M60 265v44M68 265v44M83 275h20l8-6v34l-8-6H83M90 275v22M98 275v22M111 272h12v26h-12" strokeWidth="4" />
        <path d="M148 236h-10l-16 8v72h26M128 240v76M135 238v78M122 268h26M122 290h46M148 265h20v160h-20M122 302h26" />
        <path d="M148 316h-44q-12 10-10 40v50l14 24h40zM100 330h48M98 345h48M96 362h52M98 380h50M98 398h50M104 414h44" />
        <path d="M104 320v108M112 318v112M120 318v112M132 318v90M154 300v170M162 300v90" strokeWidth="6" strokeDasharray="8 2" />
        <path d="M60 412q0-24 24-26h18q26 2 26 26V606q0 24-26 26H84q-24-2-24-26z" strokeWidth="5" />
        <path d="M66 414q0-20 20-22h14q22 2 22 22V604q0 20-22 22H86q-20-2-20-22z" strokeWidth="4" />
        <path d="M110 488h26v42h-26zM110 498h26M110 508h26M110 518h26M118 488v42M128 488v42M128 430h18M128 450h18M146 420v450M140 430v430" strokeWidth="3.500" />
        <path d="M98 560q10-16 30-14h18M94 570v60M102 556v80M110 548v60M130 540v75M92 585h54M92 600h54" strokeWidth="4" />
        <path d="M70 608h28M70 654h28M68 668v42h20M78 608v244h66M86 608v244M94 620v230M104 630v145h40M112 630v145M120 630v62h22M130 632v60M104 655h40M104 690h40M104 725h40M104 760h40M100 775v75M86 800h60M86 828h60M74 720l-4 45 8 60" />
        <path d="M82 620v230M90 660v190M96 640v130" strokeWidth="6" strokeDasharray="6 3" />

        {/* side lamp */}
        <path d="M1785 320 1880 300H1905Q1926 308 1928 340V730Q1926 765 1905 775H1880L1785 750z" strokeWidth="4.500" />
        <path d="M1833 307V768M1880 300V775" strokeWidth="5" />
        <path d="M1785 332 1833 320H1880L1926 328M1785 352 1833 338 1880 334 1926 345M1785 372 1833 355 1880 350 1926 365M1785 390 1833 380 1880 378M1785 738 1833 752H1926M1785 720 1833 736H1926M1785 700 1833 716H1926M1785 680 1833 690 1880 692M1890 305V770M1900 300V775M1912 305V768M1920 312V760M1785 310V755M1792 320V750" strokeOpacity=".8" />
        <path d="M1877 300v-8q4-15 16-15t16 15v8zM1877 290h32M1886 280v20M1900 280v20M1877 775v5q4 13 16 13t16-13v-5zM1886 775v15M1900 775v15" strokeWidth="4" />
        <path d="M1885 478h40v118h-40" strokeWidth="3.500" />
        <path d="M1926 368h12q14 2 14 16V690q0 14-14 14h-12M1934 372V700M1942 376V696M1926 380h24M1926 410h26M1926 440h26M1930 480h22M1930 520h22M1930 560h22M1930 605h22M1926 650h26M1926 680h24" strokeWidth="3.500" />
        <path d="M1929 405V565M1936 650v50M1932 380v30" strokeWidth="6" strokeDasharray="8 3" />
        <path d="M1785 446h-10l-32 22v146l24 16 18 6M1752 465v152M1760 460v162M1768 450v178M1776 446v190M1781 450v185" strokeWidth="3.500" />
        <ellipse cx="1761" cy="541" rx="8" ry="17" fillOpacity=".6" strokeWidth="4" />
        <circle cx="1856" cy="657" r="15" strokeWidth="4" />
        <path d="M1785 224q9 0 9 6t-9 6M1785 819q9 0 9 6t-9 6" strokeWidth="4" />
      </g>
      <circle cx="1873" cy="534" r="7" fill="#f5a033" stroke="#3a2a10" strokeWidth="2" />
    </svg>
  );
}

function AxisGizmo() {
  return (
    <svg width="82" height="82" viewBox="0 0 82 82" className="font-['Inter',sans-serif] text-[12px] font-bold" textAnchor="middle">
      <path d="M17 41h48" stroke="#c4384f" strokeWidth="2" />
      <path d="M41 17v48" stroke="#7aad1e" strokeWidth="2" />
      <circle cx="9" cy="41" r="7.500" fill="#703a44" stroke="#b03a4c" />
      <circle cx="41" cy="73" r="7.500" fill="#556b30" stroke="#7aad1e" />
      <circle cx="73" cy="41" r="8" fill="#c4384f" />
      <circle cx="41" cy="9" r="8" fill="#76ab1b" />
      <circle cx="41" cy="41" r="9" fill="#2f83ee" />
      <text x="73" y="45" fill="#2a0c12">X</text>
      <text x="41" y="13" fill="#1c2a08">Y</text>
      <text x="41" y="45" fill="#0a1c38">Z</text>
    </svg>
  );
}

function Viewport() {
  const [tool, setTool] = useState("select");
  return (
    <section aria-label="3D Viewport" className="relative ml-px flex min-w-0 flex-1 flex-col overflow-hidden rounded-md bg-[#3f3f3f]">
      <Wireframe />
      <ViewportHeader />
      <div className="relative flex-1">
        <div className="absolute top-0 left-0 h-[22px] w-[111px] rounded-br bg-[#383838] pt-0.5 pl-2">
          <div className="flex w-fit overflow-hidden rounded">
            {selectModes.map((m, i) => (
              <button
                key={m}
                aria-label={m}
                className={`flex h-[18px] w-[19px] items-center justify-center border-r border-[#444] ${i === 0 ? "bg-[#4772b3] text-white" : "bg-[#545454] text-[#c4c4c4]"}`}
              >
                <Icon name={m} size={15} />
              </button>
            ))}
          </div>
        </div>

        <div className="absolute top-8 left-2 flex flex-col gap-1.5">
          {toolGroups.map((group) => (
            <div key={group[0].id} className="flex flex-col gap-px overflow-hidden rounded">
              {group.map((t) => (
                <button
                  key={t.id}
                  aria-label={t.id}
                  onClick={() => setTool(t.id)}
                  className={`relative flex h-[34px] w-[38px] items-center justify-center ${tool === t.id ? "bg-[#4772b3]" : "bg-[#282828]"}`}
                >
                  <svg width="24" height="24" viewBox="0 0 24 24" aria-hidden="true">{toolIcons[t.id]}</svg>
                  {t.menu && (
                    <svg width="4" height="4" className="absolute right-0.5 bottom-0.5" aria-hidden="true">
                      <path d="M4 0v4H0z" fill="#aaa" />
                    </svg>
                  )}
                </button>
              ))}
            </div>
          ))}
        </div>

        <div className="absolute top-[31px] left-16 leading-[18px] font-semibold text-white text-shadow-[0_1px_2px_#000]">
          <p>Top Orthographic</p>
          <p>(0) Collection | vladyslav-litovka-08.001</p>
        </div>

        <div className="absolute top-0 right-0 h-[22px] w-[81px] rounded-bl bg-[#383838] pt-0.5 pl-2.5">
          <button className="flex h-[19px] w-[66px] items-center rounded border border-[#404040] bg-[#282828] pl-1.5">
            Options
            <Icon name="chevron" size={13} className="ml-auto" />
          </button>
        </div>
        <div className="absolute top-[33px] right-[9px]"><AxisGizmo /></div>
        <div className="absolute top-[115px] right-2 flex flex-col gap-0.5">
          {["zoom", "hand", "viewCamera", "grid"].map((n) => (
            <button key={n} aria-label={n} className="flex size-7 items-center justify-center rounded-full bg-[#2a2a2a]">
              <Icon name={n} />
            </button>
          ))}
        </div>
        <button aria-label="Show sidebar" className="absolute top-[39px] right-0 flex h-3.5 w-2 items-center justify-center rounded-l bg-[#2b2b2b]">
          <Icon name="left" size={10} />
        </button>

        <button className="absolute bottom-1 left-[61px] flex h-6 w-[159px] items-center gap-1 rounded bg-[#181818] pl-1.5 text-[#b0b0b0]">
          <Icon name="right" size={12} />
          Move
        </button>
      </div>
      {/* edge of the collapsed panel behind the toolbar */}
      <div className="pointer-events-none absolute top-2.5 left-0 h-[152px] w-1.5 rounded-r-md border border-l-0 border-[#4a4a4a] bg-[#303030]" />
    </section>
  );
}

function SearchBox({ label }: { label: string }) {
  return (
    <div className="flex h-5 w-[115px] items-center rounded border border-[#3d3d3d] bg-[#1d1d1d] pl-1">
      <Icon name="search" />
      <input type="search" aria-label={label} placeholder="Search" className="ml-1.5 w-0 flex-1 outline-none placeholder:text-[#6a6a6a]" />
    </div>
  );
}

type Row = {
  name: string;
  depth: string;
  icon: string;
  open?: boolean;
  arrow?: boolean;
  boxed?: boolean;
  dim?: boolean;
  checked?: boolean;
  toggles?: boolean;
  hidden?: boolean;
  noRender?: boolean;
  data?: string;
  content?: { icon: string; count: string };
};

const rows: Row[] = [
  { name: "Scene Collection", depth: "pl-0", icon: "collection" },
  { name: "Collection", depth: "pl-5", icon: "collection", arrow: true, open: true, boxed: true, checked: true, toggles: true },
  { name: "vladyslav-litovka-02.001", depth: "pl-10", icon: "mesh", arrow: true, toggles: true, data: "wrenchLine" },
  { name: "vladyslav-litovka-02.002", depth: "pl-10", icon: "mesh", arrow: true, toggles: true, data: "wrenchLine" },
  { name: "vladyslav-litovka-08.001", depth: "pl-10", icon: "mesh", arrow: true, toggles: true, boxed: true, data: "meshData" },
  { name: "Collection 2", depth: "pl-5", icon: "collection", dim: true, checked: false, toggles: true, hidden: true, noRender: true },
  { name: "Cameras", depth: "pl-5", icon: "collection", arrow: true, dim: true, checked: true, toggles: true, hidden: true, content: { icon: "movie", count: "6" } },
  { name: "Lights", depth: "pl-5", icon: "collection", arrow: true, dim: true, checked: true, toggles: true, hidden: true, content: { icon: "bulb", count: "11" } },
];

function OutlinerRow({ row }: { row: Row }) {
  return (
    <li className="flex h-5 items-center pr-[9px]">
      <div className={`flex items-center ${row.depth}`}>
        <span className="flex w-5 justify-center text-[#aaa]">
          {row.arrow && <Icon name={row.open ? "down" : "right"} size={14} />}
        </span>
        <span className={`flex size-5 items-center justify-center rounded ${row.boxed ? "border border-[#666] bg-[#4a4a4a]" : ""} ${row.icon === "mesh" ? "text-[#d08850]" : row.dim ? "text-[#888]" : "text-[#e0e0e0]"}`}>
          <Icon name={row.icon} size={15} />
        </span>
        <span className={`ml-1 whitespace-nowrap ${row.dim ? "text-[#7a7a7a]" : "text-[#c8c8c8]"}`}>{row.name}</span>
        {row.content && (
          <span className="ml-6 flex items-center text-[#7d5639]">
            <Icon name={row.content.icon} />
            <span className="-ml-1 pt-2 text-[10px] leading-3 text-[#c8c8c8]">{row.content.count}</span>
          </span>
        )}
      </div>
      {row.toggles && (
        <div className="ml-auto flex items-center text-[#e6e6e6]">
          {row.data && (
            <span className={`mr-[22px] ${row.data === "meshData" ? "text-[#1fae80]" : "text-[#6080c8]"}`}>
              <Icon name={row.data} />
            </span>
          )}
          {row.checked !== undefined && (
            <label className="relative mr-[5px] block size-2.5">
              <input
                type="checkbox"
                aria-label={`Include ${row.name}`}
                defaultChecked={row.checked}
                className="peer block size-2.5 appearance-none border border-[#bbb] checked:border-[#e6e6e6] checked:bg-[#e6e6e6]"
              />
              <Icon name="check" size={10} className="pointer-events-none absolute inset-0 hidden text-[#222] peer-checked:block" />
            </label>
          )}
          <button aria-label={`Hide ${row.name}`} className={`flex w-5 justify-center ${row.hidden ? "text-[#777]" : ""}`}>
            <Icon name={row.hidden ? "eyeClosed" : "eye"} size={14} />
          </button>
          <button aria-label={`Disable ${row.name} in renders`} className={`flex w-5 justify-center ${row.noRender ? "text-[#888]" : ""}`}>
            <Icon name="camera" size={14} />
          </button>
        </div>
      )}
    </li>
  );
}

function Outliner() {
  return (
    <section aria-label="Outliner" className="flex h-[468px] shrink-0 flex-col overflow-hidden rounded-md bg-[#282828]">
      <div className="flex h-[27px] shrink-0 items-center bg-[#2b2b2b] pr-[7px] pb-[3px] pl-2">
        <IconMenu icon="outliner" label="Editor type" />
        <div className="ml-[5px]"><IconMenu icon="layers" label="Display mode" /></div>
        <div className="ml-[17px]"><SearchBox label="Search outliner" /></div>
        <div className="ml-auto"><IconMenu icon="filter" label="Filter" /></div>
        <button aria-label="New collection" className="ml-[5px] flex size-5 items-center justify-center rounded border border-[#555] bg-[#4a4a4a]">
          <Icon name="newCollection" size={15} />
        </button>
      </div>
      <div className="relative flex-1 bg-[repeating-linear-gradient(#282828_0_20px,#2b2b2b_20px_40px)]">
        <ul>
          {rows.map((row) => <OutlinerRow key={row.name} row={row} />)}
        </ul>
        <div className="absolute top-11 left-[29px] h-[50px] w-px bg-[#777]" />
        <div className="absolute inset-x-2 bottom-0.5 mr-[18px] h-[3px] rounded bg-[#3d3d3d]" />
      </div>
    </section>
  );
}

function Properties() {
  const [tab, setTab] = useState("wrench");
  return (
    <section aria-label="Properties" className="flex min-h-0 flex-1 flex-col overflow-hidden rounded-md bg-[#303030]">
      <div className="flex h-[25px] shrink-0 items-center pr-[7px] pb-0.5 pl-2">
        <IconMenu icon="properties" label="Editor type" />
        <div className="ml-[66px]"><SearchBox label="Search properties" /></div>
        <button aria-label="Options" className="ml-auto flex size-5 items-center justify-center rounded border border-[#404040] bg-[#282828]">
          <Icon name="chevron" size={13} />
        </button>
      </div>
      <div className="flex min-h-0 flex-1">
        <nav aria-label="Property tabs" className="flex w-7 shrink-0 flex-col gap-2.5 bg-[#1d1d1d] pt-[9px] pl-0.5">
          {tabGroups.map((group) => (
            <div key={group[0].icon} className="flex flex-col gap-0.5">
              {group.map((t) => (
                <button
                  key={t.icon}
                  aria-label={t.icon}
                  onClick={() => setTab(t.icon)}
                  className={`flex h-[26px] items-center justify-center rounded-l ${t.color} ${tab === t.icon ? "bg-[#303030]" : ""}`}
                >
                  <Icon name={t.icon} size={14} />
                </button>
              ))}
            </div>
          ))}
        </nav>
        <div className="flex-1 pt-2 pr-2 pl-[9px]">
          <div className="flex h-5 items-center pl-0.5">
            <Icon name="object" size={15} />
            <span className="ml-2">vladyslav-litovka-08.001</span>
            <button aria-label="Pin" className="ml-auto pr-px text-[#999]"><Icon name="pin" size={15} /></button>
          </div>
          <button className="relative mt-4 flex h-[19px] w-full items-center justify-center rounded bg-[#545454] pl-5">
            <Icon name="plus" size={14} className="absolute left-[5px]" />
            Add Modifier
          </button>
        </div>
      </div>
    </section>
  );
}

function StatusBar() {
  return (
    <footer className="flex h-[21px] shrink-0 items-center pr-3 pl-3 text-[#999]">
      {["M.5 6V4Q.5.500 5 .5v5.500z", "M4 3h3v5H4z", "M6 .5q4.500 0 4.500 3.500v2H6z"].map((d) => (
        <div key={d} className="w-[211px]">
          <svg width="11" height="15" aria-hidden="true">
            <rect x=".5" y=".5" width="10" height="14" rx="3.500" fill="none" stroke="currentColor" />
            <path d={d} fill="currentColor" />
          </svg>
        </div>
      ))}
      <span className="ml-auto text-[12px]">4.1.1</span>
    </footer>
  );
}

export default function App() {
  return (
    <div className="flex h-screen flex-col overflow-hidden bg-[#181818] font-['Inter',sans-serif] text-[11px] leading-4 text-[#d9d9d9]">
      <TitleBar />
      <TopBar />
      <main className="flex min-h-0 flex-1 gap-[3px] pr-px">
        <Viewport />
        <aside className="flex w-[325px] shrink-0 flex-col gap-[3px]">
          <Outliner />
          <Properties />
        </aside>
      </main>
      <StatusBar />
    </div>
  );
}
